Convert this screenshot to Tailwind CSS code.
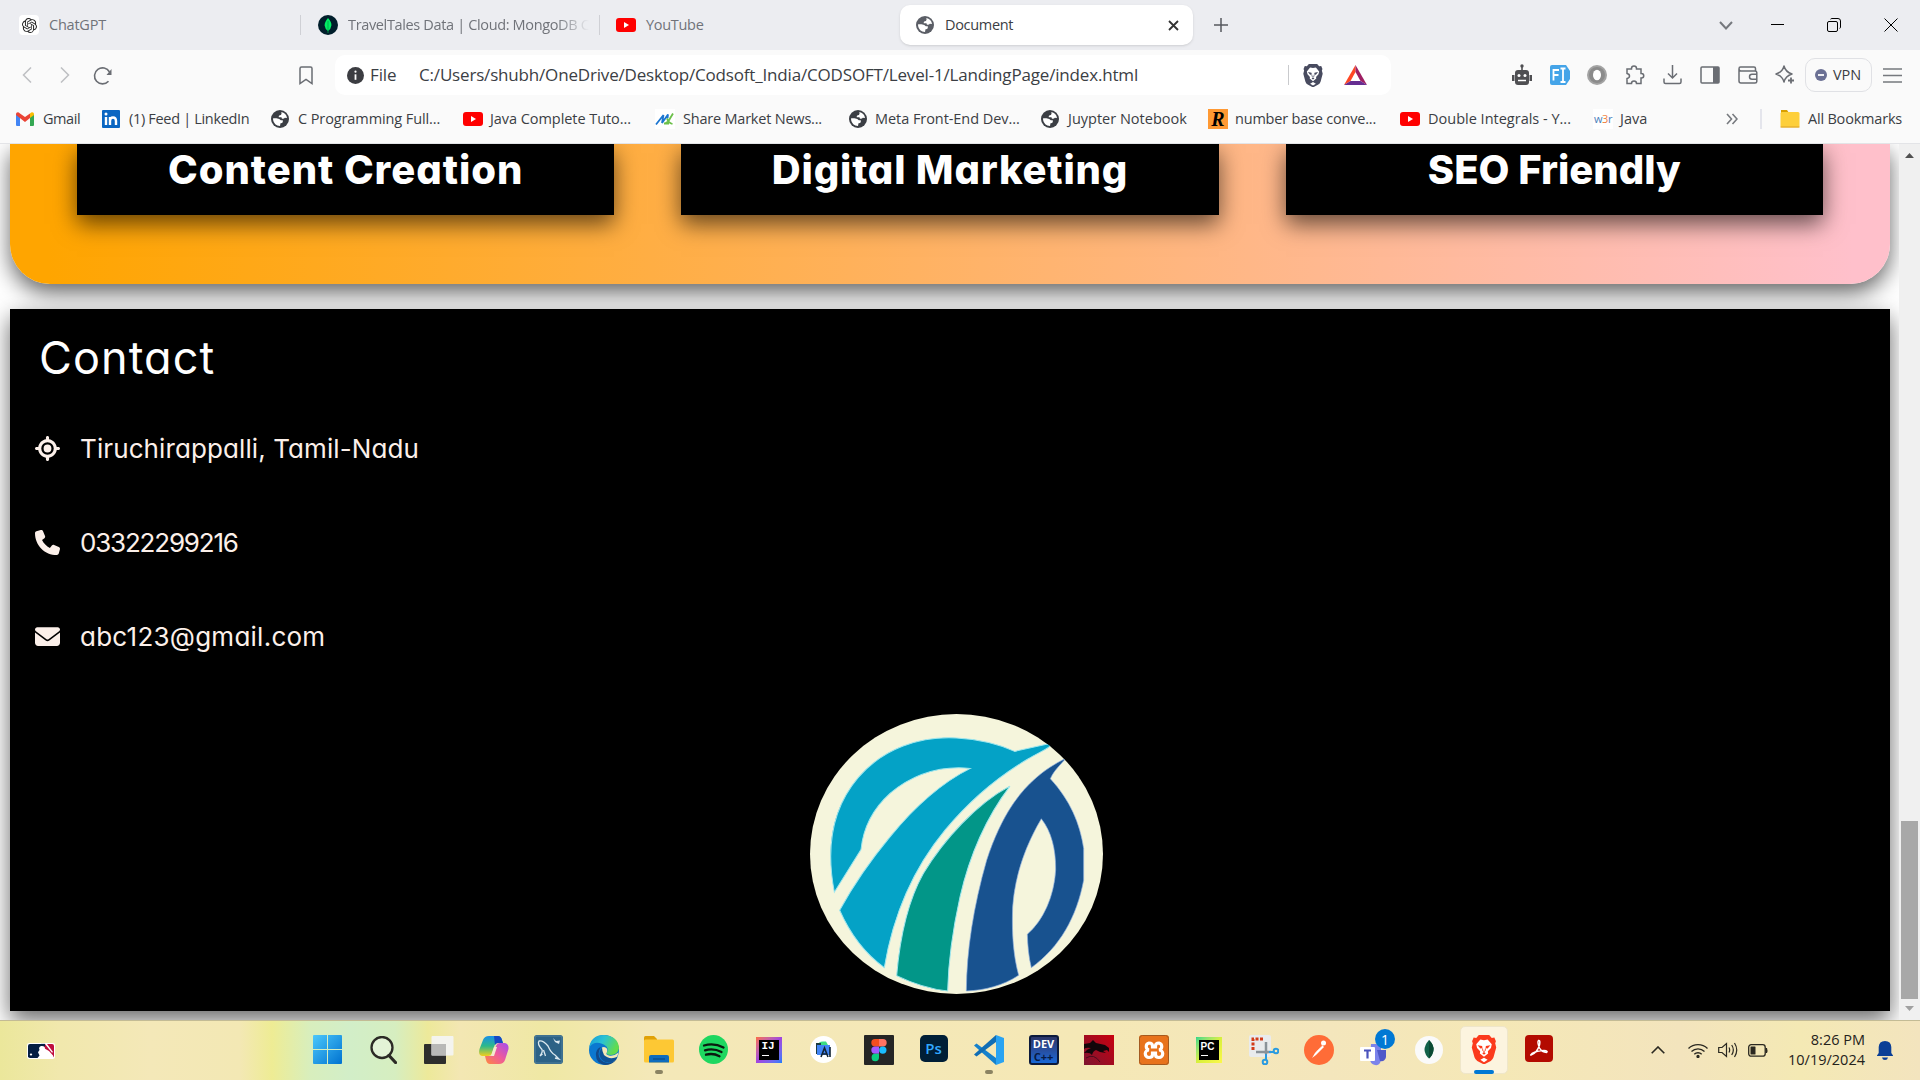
<!DOCTYPE html>
<html lang="en">
<head>
<meta charset="utf-8">
<title>Document</title>
<script src="https://cdn.jsdelivr.net/npm/@tailwindcss/browser@4"></script>
</head>
<body class="w-[1920px] h-[1080px] overflow-hidden bg-white font-['Open_Sans',sans-serif] text-[#3b3e44]">
<svg class="hidden">
  <symbol id="globe" viewBox="0 0 18 18"><circle cx="9" cy="9" r="9" fill="currentColor"/><path d="M10.300 2.100C13.400 2.600 15.700 4.900 16 8L13.800 7.800Q12.800 9.300 10.800 8.600L10.500 7.300H7.800Q7.300 5.800 8.700 5.200L10 5Q11 3.500 10.300 2.100Z" fill="#fff"/><path d="M2.100 8.200H5.500Q9 8.500 9.800 10.200H11.800V12Q11.500 13.200 9.500 13.200L9 15.900Q3 15.500 2.100 10Z" fill="#fff"/></symbol>
  <symbol id="yt" viewBox="0 0 20 14"><rect width="20" height="14" rx="3" fill="#f00"/><path d="M8 4v6l5-3z" fill="#fff"/></symbol>
  <symbol id="lion" viewBox="0 0 24 28"><path d="M7 0h10l2.500 2.800 2.500-.3L23.500 6l-.7 2 1 4-2.600 9.500q-.8 2.300-2.700 3.500L12 28.500 5.500 25q-1.900-1.200-2.700-3.500L.2 12l1-4-.7-2L2 2.500l2.500.3z" fill="currentColor"/><path d="M12 5l3.500-.7 4 4.700-.8 3.500-3 3.300.3 2-4 3.200-4-3.200.3-2-3-3.300L4.500 9l4-4.700z" fill="#fff"/><path d="M12 22l3.500 2L12 26.200 8.500 24z" fill="#fff"/><path d="M5.800 9.800l4.400.7.300 2.200-2 .3zM18.200 9.800l-4.400.7-.3 2.200 2 .3zM10.300 17.500L12 16.300l1.700 1.200L12 19z" fill="currentColor"/><path d="M10.600 13l.2 2.200 1.200.8 1.200-.8.200-2.200" stroke="currentColor" stroke-width=".8" fill="none"/></symbol>
</svg>

<!-- Tab strip -->
<header class="flex h-[50px] items-center bg-[#ecedf1] text-[14.5px] text-[#707379]">
  <div class="flex w-[300px] items-center pl-[19px]">
    <span class="flex size-5 items-center justify-center rounded bg-white"><svg class="size-[15px]" viewBox="0 0 24 24" fill="#222"><path d="M22.2819 9.8211a5.9847 5.9847 0 0 0-.5157-4.9108 6.0462 6.0462 0 0 0-6.5098-2.9A6.0651 6.0651 0 0 0 4.9807 4.1818a5.9847 5.9847 0 0 0-3.9977 2.9 6.0462 6.0462 0 0 0 .7427 7.0966 5.98 5.98 0 0 0 .511 4.9107 6.051 6.051 0 0 0 6.5146 2.9001A5.9847 5.9847 0 0 0 13.2599 24a6.0557 6.0557 0 0 0 5.7718-4.2058 5.9894 5.9894 0 0 0 3.9977-2.9001 6.0557 6.0557 0 0 0-.7475-7.0729zm-9.022 12.6081a4.4755 4.4755 0 0 1-2.8764-1.0408l.1419-.0804 4.7783-2.7582a.7948.7948 0 0 0 .3927-.6813v-6.7369l2.02 1.1686a.071.071 0 0 1 .038.052v5.5826a4.504 4.504 0 0 1-4.4945 4.4944zm-9.6607-4.1254a4.4708 4.4708 0 0 1-.5346-3.0137l.142.0852 4.783 2.7582a.7712.7712 0 0 0 .7806 0l5.8428-3.3685v2.3324a.0804.0804 0 0 1-.0332.0615L9.74 19.9502a4.4992 4.4992 0 0 1-6.1408-1.6464zM2.3408 7.8956a4.485 4.485 0 0 1 2.3655-1.9728V11.6a.7664.7664 0 0 0 .3879.6765l5.8144 3.3543-2.0201 1.1685a.0757.0757 0 0 1-.071 0l-4.8303-2.7865A4.504 4.504 0 0 1 2.3408 7.872zm16.5963 3.8558L13.1038 8.364 15.1192 7.2a.0757.0757 0 0 1 .071 0l4.8303 2.7913a4.4944 4.4944 0 0 1-.6765 8.1042v-5.6772a.79.79 0 0 0-.407-.667zm2.0107-3.0231l-.142-.0852-4.7735-2.7818a.7759.7759 0 0 0-.7854 0L9.409 9.2297V6.8974a.0662.0662 0 0 1 .0284-.0615l4.8303-2.7866a4.4992 4.4992 0 0 1 6.6802 4.66zM8.3065 12.863l-2.02-1.1638a.0804.0804 0 0 1-.038-.0567V6.0742a4.4992 4.4992 0 0 1 7.3757-3.4537l-.142.0805L8.704 5.459a.7948.7948 0 0 0-.3927.6813zm1.0976-2.3654l2.602-1.4998 2.6069 1.4998v2.9994l-2.5974 1.4997-2.6067-1.4997Z"/></svg></span>
    <span class="ml-[10px] tracking-[-0.22px] whitespace-nowrap">ChatGPT</span>
  </div>
  <div class="flex h-5 w-[299px] items-center border-l border-[#cfd0d5] pl-[17px]">
    <svg class="size-5" viewBox="0 0 20 20"><circle cx="10" cy="10" r="10" fill="#001e2b"/><path d="M10 3Q13.800 7 13.400 10.500 13 14 10 16 7 14 6.600 10.500 6.500 7 10 3Z" fill="#00ed64"/><path d="M10 6v12" stroke="#00a04a" stroke-width=".8"/></svg>
    <span class="ml-[10px] w-[245px] overflow-hidden tracking-[-0.35px] whitespace-nowrap [mask-image:linear-gradient(to_right,black_208px,transparent_241px)]">TravelTales Data | Cloud: MongoDB C</span>
  </div>
  <div class="flex h-5 w-[301px] items-center border-l border-[#cfd0d5] pl-4">
    <svg class="h-[14px] w-5"><use href="#yt"/></svg>
    <span class="ml-[10px] tracking-[-0.3px] whitespace-nowrap">YouTube</span>
  </div>
  <div class="flex h-10 w-[293px] items-center rounded-[10px] bg-white pl-4 shadow-sm">
    <svg class="size-[18px] text-[#5b5e66]"><use href="#globe"/></svg>
    <span class="ml-[11px] tracking-[-0.32px] whitespace-nowrap text-[#3b3e44]">Document</span>
    <svg class="mr-[14px] ml-auto size-[11px]" viewBox="0 0 11 11"><path d="M1 1l9 9M10 1l-9 9" stroke="#333" stroke-width="1.800"/></svg>
  </div>
  <svg class="ml-[21px] size-[14px]" viewBox="0 0 14 14"><path d="M7 0v14M0 7h14" stroke="#55585e" stroke-width="1.500"/></svg>
  <div class="ml-auto flex items-center pr-[22px]">
    <svg class="h-[9px] w-[14px]" viewBox="0 0 14 9"><path d="M1 1l6 6.500L13 1" stroke="#76797e" stroke-width="2" fill="none"/></svg>
    <svg class="ml-[38px] h-[14px] w-[13px]" viewBox="0 0 13 14"><path d="M0 6.500h13" stroke="#000"/></svg>
    <svg class="ml-[43px] size-[14px]" viewBox="0 0 14 14" fill="none" stroke="#000"><rect x=".5" y="3.500" width="10" height="10" rx="1.500"/><path d="M3.500 1.200Q4 .5 5 .5H11a2.500 2.500 0 0 1 2.500 2.500v6q0 1-.8 1.500"/></svg>
    <svg class="ml-[43px] size-[14px]" viewBox="0 0 14 14"><path d="M.5 .5l13 13M13.500 .5l-13 13" stroke="#000"/></svg>
  </div>
</header>

<!-- Navigation toolbar -->
<nav class="flex h-[50px] items-center bg-[#fafafa] pl-[22px] text-[#76797e]">
  <svg class="h-4 w-[10px]" viewBox="0 0 10 16"><path d="M9 .5L1.500 8 9 15.500" stroke="#bdbfc2" stroke-width="1.500" fill="none"/></svg>
  <svg class="ml-7 h-4 w-[10px]" viewBox="0 0 10 16"><path d="M1 .5L8.500 8 1 15.500" stroke="#bdbfc2" stroke-width="1.500" fill="none"/></svg>
  <svg class="ml-[23px] size-[19px]" viewBox="0 0 19 19"><path d="M15.500 15.200A8 8 0 1 1 16.500 6" stroke="#6a6d73" stroke-width="1.600" fill="none"/><path d="M18.500 3v6h-5z" fill="#6a6d73"/></svg>
  <svg class="ml-[187px] h-[19px] w-[14px]" viewBox="0 0 14 19"><path d="M1 2.500Q1 1 2.500 1h9Q13 1 13 2.500V17.500L7 13.300 1 17.500z" stroke="#6a6d73" stroke-width="1.500" fill="none"/></svg>
  <div class="ml-[22px] flex h-10 w-[1056px] items-center rounded-[10px] bg-white pl-3 text-[17px] text-[#3b3e44]">
    <svg class="size-[17px]" viewBox="0 0 17 17"><circle cx="8.500" cy="8.500" r="8.500" fill="#3c3d42"/><path d="M8.500 7.300v5.500" stroke="#fff" stroke-width="1.800"/><circle cx="8.500" cy="4.700" r="1.100" fill="#fff"/></svg>
    <span class="ml-[6px] w-[49px] tracking-[-0.1px] whitespace-nowrap">File</span>
    <span class="tracking-[-0.175px] whitespace-nowrap">C:/Users/shubh/OneDrive/Desktop/Codsoft_India/CODSOFT/Level-1/LandingPage/index.html</span>
    <div class="ml-auto flex items-center pr-6">
      <span class="h-5 w-px bg-[#c9cacd]"></span>
      <svg class="ml-[14px] h-[23px] w-5 text-[#484b5f]"><use href="#lion"/></svg>
      <svg class="ml-[21px] h-5 w-[23px]" viewBox="0 0 23 20"><path d="M11.500 0L0 20l6.500-4L11.500 7z" fill="#ff4724"/><path d="M11.500 0L23 20l-6.500-4-5-9z" fill="#9e1f63"/><path d="M0 20h23l-6.500-4h-10z" fill="#662d91"/></svg>
    </div>
  </div>
  <div class="ml-auto flex items-center pr-[18px]">
    <svg class="h-[22px] w-5" viewBox="0 0 20 22" fill="#4f4f52"><path d="M9.200 2h1.600v5H9.200z"/><circle cx="10" cy="2" r="1.700"/><rect x="3" y="6" width="14" height="15" rx="3"/><path d="M0 11h2.500v6H0zM17.500 11H20v6h-2.500z"/><circle cx="7" cy="11.500" r="1.500" fill="#fff"/><circle cx="13" cy="11.500" r="1.500" fill="#fff"/><path d="M6 16.500h8" stroke="#fff" stroke-width="1.500"/></svg>
    <svg class="ml-[18px] h-5 w-5" viewBox="0 0 20 20"><path d="M2 0h14l4 6v8l-4 6H2q-2 0-2-2V2Q0 0 2 0z" fill="#45a4e8"/><path d="M3.500 15.500V5h5.500M3.500 10h5M10.500 3.500h5M10.500 17h5M13 3.500V17" stroke="#fff" stroke-width="1.800" fill="none"/></svg>
    <svg class="ml-[17px] size-5" viewBox="0 0 20 20"><circle cx="10" cy="10" r="10" fill="#a3a3a3"/><circle cx="10" cy="10" r="8" fill="#8b8b8b"/><ellipse cx="10" cy="10" rx="4" ry="5.300" fill="#fff"/></svg>
    <svg class="ml-[18px] h-5 w-5" viewBox="0 0 20 20" fill="none" stroke="#6a6d73" stroke-width="1.500"><path d="M2 4H6.500V3.500a2.500 2.500 0 0 1 5 0V4H16v4.500h.5a2.200 2.200 0 0 1 0 4.500H16v5.500h-4.500a2.500 2.500 0 0 0-5 0H2V13.500q2.500-.5 2.500-2.500T2 8.500z"/></svg>
    <svg class="ml-[18px] h-5 w-[19px]" viewBox="0 0 19 20" fill="none" stroke="#6a6d73" stroke-width="1.500"><path d="M9.500 0v13M5 8.500l4.500 4.500L14 8.500M1 13.500V17q0 1.500 1.500 1.500h14Q18 18.500 18 17v-3.500"/></svg>
    <svg class="ml-[18px] h-[18px] w-5" viewBox="0 0 20 18"><rect x="1" y="1" width="18" height="16" rx="1" fill="none" stroke="#6a6d73" stroke-width="1.500"/><path d="M13 1h6v16h-6z" fill="#6a6d73"/></svg>
    <svg class="ml-[18px] h-[18px] w-5" viewBox="0 0 20 18" fill="none" stroke="#6a6d73" stroke-width="1.500"><path d="M17.500 5V2.500Q17.500 1 16 1H2.500Q1 1 1 2.700T2.500 5H17q1.800 0 1.800 1.500v9Q18.800 17 17 17H3q-2 0-2-2V3M19 8.300h-5a2.500 2.500 0 0 0 0 5h5"/></svg>
    <svg class="ml-[17px] size-5" viewBox="0 0 20 20" fill="none" stroke="#6a6d73" stroke-width="1.500"><path d="M9 1q1.500 6 8 8-6.500 2-8 8-1.500-6-8-8 6.500-2 8-8z" stroke-linejoin="round"/><path d="M16 12.500v6M13 15.500h6" stroke-width="1.800"/></svg>
    <div class="ml-[10px] flex h-[34px] w-[67px] items-center rounded-[10px] border border-[#e0e1e5] pl-[9px] text-[14.5px] text-[#3b3e44]">
      <svg class="size-3" viewBox="0 0 12 12"><circle cx="6" cy="6" r="6" fill="#6b7094"/><path d="M3 6h6" stroke="#fff" stroke-width="1.800"/></svg>
      <span class="ml-[6px] tracking-[-0.1px] whitespace-nowrap">VPN</span>
    </div>
    <svg class="ml-[11px] h-[15px] w-[19px]" viewBox="0 0 19 15"><path d="M0 1h19M0 7.500h19M0 14h19" stroke="#76797e" stroke-width="1.500"/></svg>
  </div>
</nav>

<!-- Bookmarks bar -->
<div class="flex h-[44px] items-center border-b border-[#e3e4e7] bg-[#fafafa] pb-[5px] pl-4 text-[14.5px] whitespace-nowrap">
  <div class="flex w-[86px] items-center"><svg class="h-[14px] w-[18px]" viewBox="0 0 18 14"><path d="M0 2v11q0 1 1 1h3V5z" fill="#4285f4"/><path d="M18 2v11q0 1-1 1h-3V5z" fill="#34a853"/><path d="M14 1.500Q16-.8 17.500 .8 18 1.400 18 3L14 6z" fill="#fbbc04"/><path d="M4 1.500Q2-.8 .5 .8 0 1.400 0 3L9 10l5-4V1.500L9 5z" fill="#ea4335"/></svg><span class="ml-[9px] tracking-[-0.45px]">Gmail</span></div>
  <div class="flex w-[169px] items-center"><svg class="size-[18px]" viewBox="0 0 18 18"><rect width="18" height="18" rx="1" fill="#0a66c2"/><path d="M4 7v8M8 15V7M8 11q0-3.500 3-3.500T14 11v4" stroke="#fff" stroke-width="2.400" fill="none"/><circle cx="4" cy="4" r="1.500" fill="#fff"/></svg><span class="ml-[9px] tracking-[-0.32px]">(1) Feed | LinkedIn</span></div>
  <div class="flex w-[192px] items-center"><svg class="size-[18px]"><use href="#globe"/></svg><span class="ml-[9px] tracking-[-0.1px]">C Programming Full...</span></div>
  <div class="flex w-[192px] items-center"><svg class="h-[14px] w-5"><use href="#yt"/></svg><span class="ml-[7px] tracking-[-0.06px]">Java Complete Tuto...</span></div>
  <div class="flex w-[194px] items-center"><svg class="size-5" viewBox="0 0 20 20"><rect width="20" height="20" fill="#fff"/><path d="M1 15.500L8.500 6 7 14l6-8.500-.5 4" stroke="#1b75d0" stroke-width="1.800" fill="none"/><path d="M10 14.500q4-2 5-5l3-5M12 9.500q1.500 4.500 5.500 5.500M9 14.500h5" stroke="#6cc04a" stroke-width="1.800" fill="none"/></svg><span class="ml-2 tracking-[-0.21px]">Share Market News...</span></div>
  <div class="flex w-[192px] items-center"><svg class="size-[18px]"><use href="#globe"/></svg><span class="ml-[8px] tracking-[-0.06px]">Meta Front-End Dev...</span></div>
  <div class="flex w-[167px] items-center"><svg class="size-[18px]"><use href="#globe"/></svg><span class="ml-[9px]">Juypter Notebook</span></div>
  <div class="flex w-[192px] items-center"><span class="flex size-5 items-center justify-center bg-[#f93] font-['Liberation_Serif',serif] text-[20px] leading-none font-bold text-black italic">R</span><span class="ml-[7px] tracking-[-0.2px]">number base conve...</span></div>
  <div class="flex w-[193px] items-center"><svg class="h-[14px] w-5"><use href="#yt"/></svg><span class="ml-2">Double Integrals - Y...</span></div>
  <div class="flex w-[133px] items-center"><span class="flex size-5 items-center justify-center bg-white text-[11px] tracking-[-0.5px] text-[#4a7ebb]">w<span class="text-[#f08040]">3</span>r</span><span class="ml-[7px]">Java</span></div>
  <svg class="h-3 w-3" viewBox="0 0 12 12"><path d="M1 1l4.500 5L1 11M6.500 1L11 6l-4.500 5" stroke="#76797e" stroke-width="1.600" fill="none"/></svg>
  <span class="ml-[22px] h-5 w-[2px] bg-[#e4e5ec]"></span>
  <svg class="ml-[18px] h-[18px] w-5" viewBox="0 0 20 18"><path d="M1 0h6l2 3H1z" fill="#d9a000"/><rect x=".5" y="2" width="19" height="15.500" rx="1.500" fill="#fdcf3b"/><path d="M.5 17h19" stroke="#dba12a"/></svg>
  <span class="ml-2 tracking-[-0.2px]">All Bookmarks</span>
</div>

<!-- Page viewport -->
<main class="flex h-[876px] overflow-hidden bg-white font-['Inter',sans-serif] [font-feature-settings:'cv11']">
  <div class="flex w-[1899px] flex-col gap-[25px] overflow-hidden pr-[9px] pl-[10px]">
    <section class="flex h-[140px] shrink-0 items-start gap-[67px] rounded-b-[40px] bg-[linear-gradient(90deg,#ffa500_2%,#ffc0cb_98%)] px-[67px] text-[40px] leading-[46px] font-extrabold text-white shadow-[0_9px_22px_rgba(0,0,0,0.6)]">
      <div class="flex h-[71px] flex-1 justify-center bg-black pt-[3px] shadow-[0_9px_22px_rgba(0,0,0,0.6)]"><span class="tracking-[0.95px]">Content Creation</span></div>
      <div class="flex h-[71px] flex-1 justify-center bg-black pt-[3px] shadow-[0_9px_22px_rgba(0,0,0,0.6)]"><span class="tracking-[0.8px]">Digital Marketing</span></div>
      <div class="flex h-[71px] flex-1 justify-center bg-black pt-[3px] shadow-[0_9px_22px_rgba(0,0,0,0.6)]"><span>SEO Friendly</span></div>
    </section>
    <footer class="flex h-[702px] shrink-0 flex-col bg-black text-[26px] text-[#fcf0ea] shadow-[0_9px_22px_rgba(0,0,0,0.6)]">
      <h2 class="mt-6 h-[54px] pl-[29px] text-[45px] leading-[50px] tracking-[1.1px] text-white">Contact</h2>
      <div class="mt-[30px] flex h-[62px] items-center pl-[25px]"><svg class="size-[25px]" viewBox="0 0 512 512" fill="currentColor"><path d="M256 0c17.700 0 32 14.300 32 32l0 34.700C368.400 80.100 431.900 143.600 445.300 224l34.700 0c17.700 0 32 14.300 32 32s-14.300 32-32 32l-34.700 0C431.900 368.400 368.400 431.900 288 445.300l0 34.700c0 17.700-14.300 32-32 32s-32-14.300-32-32l0-34.700C143.600 431.900 80.100 368.400 66.700 288L32 288c-17.700 0-32-14.300-32-32s14.300-32 32-32l34.700 0C80.100 143.600 143.600 80.100 224 66.700L224 32c0-17.700 14.300-32 32-32zM128 256a128 128 0 1 0 256 0 128 128 0 1 0 -256 0zm128-80a80 80 0 1 1 0 160 80 80 0 1 1 0-160z"/></svg><span class="ml-5 tracking-[0.1px]">Tiruchirappalli, Tamil-Nadu</span></div>
      <div class="mt-8 flex h-[62px] items-center pl-[25px]"><svg class="size-[25px]" viewBox="0 0 512 512" fill="currentColor"><path d="M164.900 24.600c-7.700-18.600-28-28.500-47.400-23.200l-88 24C12.100 30.200 0 46 0 64C0 311.400 200.600 512 448 512c18 0 33.800-12.100 38.600-29.500l24-88c5.300-19.400-4.600-39.700-23.200-47.400l-96-40c-16.300-6.800-35.200-2.100-46.300 11.600L304.700 368C234.300 334.700 177.300 277.700 144 207.300L193.300 167c13.700-11.200 18.400-30 11.600-46.300l-40-96z"/></svg><span class="ml-5 tracking-[-1.2px]">03322299216</span></div>
      <div class="mt-8 flex h-[62px] items-center pl-[25px]"><svg class="size-[25px]" viewBox="0 0 512 512" fill="currentColor"><path d="M48 64C21.500 64 0 85.500 0 112c0 15.100 7.100 29.300 19.200 38.400L236.800 313.600c11.400 8.500 27 8.500 38.400 0L492.800 150.400c12.100-9.100 19.200-23.300 19.200-38.400c0-26.500-21.500-48-48-48L48 64zM0 176L0 384c0 35.300 28.700 64 64 64l384 0c35.300 0 64-28.700 64-64l0-208L294.400 339.200c-22.800 17.100-54 17.100-76.800 0L0 176z"/></svg><span class="ml-5 tracking-[0.25px]">abc123@gmail.com</span></div>
      <svg class="mt-[47px] ml-[800px] h-[280px] w-[293px]" viewBox="60 42 879 839" preserveAspectRatio="none">
        <defs><clipPath id="disc"><ellipse cx="499.500" cy="461.500" rx="439.500" ry="419.500"/></clipPath></defs>
        <g clip-path="url(#disc)"><rect x="60" y="42" width="879" height="839" fill="#f5f5dc"/>
        <g stroke="#9fe6ee" stroke-width="3">
        <path d="M133 576C105 430 130 320 205 232C280 145 390 108 500 114C570 118 625 132 674 154L790 128C780 145 750 155 715 176C620 232 540 300 465 390C370 505 310 640 283 802C225 760 180 700 149 630C190 555 250 470 300 410C370 325 450 250 541 205C440 195 360 230 300 280C250 325 220 380 213 448Z" fill="#04a2c6"/>
        <path d="M660 258C560 310 460 420 400 520C355 600 330 710 320 826C365 848 420 866 473 872C475 780 490 680 510 590C540 460 590 350 660 258Z" fill="#029688"/></g>
        <g stroke="#8fb0e0" stroke-width="2"><path d="M829 174C805 200 790 215 781 236C840 300 870 370 881 445V540C860 650 810 740 724 802C716 770 713 735 712 702C760 660 792 590 797 510C798 450 785 395 754 356C710 430 675 520 668 620C665 700 670 765 686 825C640 855 585 870 529 872C530 750 550 620 590 480C630 360 690 240 829 174Z" fill="#18528f"/></g></g>
      </svg>
    </footer>
  </div>
  <div class="flex w-[21px] flex-col items-center bg-[#f0f0f0] pt-[9px] pb-[9px]">
    <svg class="h-[5px] w-[9px]" viewBox="0 0 9 5"><path d="M4.500 0L9 5H0z" fill="#505050"/></svg>
    <span class="mt-[663px] h-[179px] w-[17px] bg-[#a8a8a8]"></span>
    <svg class="mt-[7px] h-[5px] w-[9px]" viewBox="0 0 9 5"><path d="M4.500 5L9 0H0z" fill="#a0a0a0"/></svg>
  </div>
</main>

<!-- Taskbar -->
<footer class="flex h-[60px] items-center border-t border-[#c3bb95] bg-[linear-gradient(90deg,#ebe79b_0,#f1e8ad_60px,#f4e8b8_150px,#f3e8b4_240px,#eeec94_272px,#d8eebd_310px,#d2eec8_350px,#d6eec0_395px,#ede99a_428px,#f3e7b3_460px,#efe8a4_545px,#f4e8b8_650px,#f5e8b6_1100px,#f4e6bc_1330px,#f5e8b6_1500px,#f3e4bd_1680px,#f4e9b4_1800px,#f3e4be_1920px)]">
  <div class="w-[301px] pl-[27px]"><svg class="h-[16px] w-7" viewBox="0 0 28 18" preserveAspectRatio="none"><rect width="28" height="18" rx="2.500" fill="#fff"/><path d="M3 1h11v16H3q-2 0-2-2V3q0-2 2-2z" fill="#041e42"/><path d="M14 1h11q2 0 2 2v12q0 2-2 2H14z" fill="#bf0d3e"/><path d="M14 1h4v3h-4z" fill="#041e42"/><path d="M15 3.500a3 3 0 0 1 3 3L22 9l4 5 1 3H10.500l2-3-1.500-3.500L12.500 8 12 5.500Q13 3 15 3.500zM18 1l7 10 1-1L20 1z" fill="#fff"/><circle cx="4" cy="13" r="1.200" fill="#fff"/></svg></div>
  <div class="flex h-full items-center *:flex *:h-full *:w-[55px] *:items-center *:justify-center *:pb-[2px]">
    <div class="pr-[3px]"><svg class="size-[29px]" viewBox="0 0 29 29"><defs><linearGradient id="win" x2="1" y2="1"><stop stop-color="#4cc8fb"/><stop offset="1" stop-color="#0072d0"/></linearGradient></defs><path d="M0 1q0-1 1-1h13v14H0zM15 0h13q1 0 1 1v13H15zM0 15h14v14H1q-1 0-1-1zM15 15h14v13q0 1-1 1H15z" fill="url(#win)"/></svg></div>
    <div><svg class="h-7 w-[27px]" viewBox="0 0 27 28" fill="none" stroke="#2b2a25"><circle cx="12" cy="11.500" r="10.500" stroke-width="2.300" fill="#fff5"/><path d="M19 19.500l6.500 7" stroke-width="3.200" stroke-linecap="round"/></svg></div>
    <div><svg class="h-7 w-[30px]" viewBox="0 0 30 28"><rect y="8" width="22" height="20" rx="1" fill="#2e2e2c"/><rect x="7.500" width="22" height="19.500" rx="1" fill="#f4f4f4" opacity=".93"/><path d="M7.500 8H22v11.500H7.500z" fill="#b9b9b7"/></svg></div>
    <div><svg class="h-7 w-[30px]" viewBox="0 0 30 28"><defs><linearGradient id="cp1" x2="0" y2="1"><stop stop-color="#1a8fe8"/><stop offset=".5" stop-color="#2cb98a"/><stop offset="1" stop-color="#f2cf1d"/></linearGradient><linearGradient id="cp2" x1="1" x2="0" y2="1"><stop stop-color="#a24df0"/><stop offset=".5" stop-color="#ee5a9c"/><stop offset="1" stop-color="#ff8a3c"/></linearGradient></defs><path d="M10 0h9q3 0 4 4l1 3h-5q-3 0-4 4l-2 6q-1 3-4 3H3q-4-1-2.500-7L4 4q1.500-4 6-4z" fill="url(#cp1)"/><path d="M15 0h4q3 0 4 4l1 3h-5q-2 0-3 2z" fill="#1748c4"/><path d="M20 28h-9q-3 0-4-4l-1-4h5q3 0 4-4l2-6q1-3 4-3h5q4 1 3.500 6L26 24q-1.500 4-6 4z" fill="url(#cp2)"/><path d="M15 11l3 0-3 9-3 0z" fill="#f4ead0"/></svg></div>
    <div><svg class="size-[29px]" viewBox="0 0 29 29"><rect width="29" height="29" rx="3" fill="#2c6286"/><rect x="1" y="1" width="27" height="27" rx="2" fill="none" stroke="#50809c"/><path d="M6 21Q9 17 8 14.500 3 9 5 6 9 5 14 11 17 18 21 20L25 24 21 23M9.500 15l2 6M6 21l2.500-2" stroke="#dce9ef" stroke-width="1.300" fill="none"/><path d="M19 3l3 3 4-.5-1 3.500-4-2z" fill="#dce9ef"/></svg></div>
    <div><svg class="size-[30px]" viewBox="0 0 30 30"><defs><linearGradient id="ed" x2="1" y2=".4"><stop stop-color="#1698dc"/><stop offset=".5" stop-color="#2bc3d2"/><stop offset="1" stop-color="#62dc4c"/></linearGradient></defs><circle cx="15" cy="15" r="15" fill="#0b78d0"/><path d="M0 13Q2 0 15 0 29 1 30 13 29 20 22 20 17 20 17.500 17.500 20 15 17.500 11.500 12 7 6 8 2 9 0 13z" fill="url(#ed)"/><path d="M12 12Q7 19 12 25q6 6 15 0-4 5-11 5Q6 28 7 18q1-5 5-6z" fill="#114a8b"/><path d="M13.500 12q6 0 4.500 5-2 2.500 2 3.500 5 1 9.500-3-1 6-6 7-8-1-10-5-2-4 0-7.500z" fill="#f4e8b8"/><path d="M13 12.500Q8 19 13 25q6 5 14 0l1.500-3Q20 25 15 20q-2-4-2-7.500z" fill="#0e5296"/></svg></div>
    <div class="relative"><svg class="h-[27px] w-[30px]" viewBox="0 0 30 27"><path d="M0 1.500Q0 0 1.500 0H10l3 3v4H0z" fill="#e0a106"/><rect y="3.500" width="30" height="23" rx="1.500" fill="#fdc834"/><path d="M5 26.500V21q0-2 2-2h16q2 0 2 2v5.500z" fill="#0f6cbd"/><path d="M9 23h12" stroke="#0a4c8c" stroke-width="1.300"/></svg><span class="absolute bottom-[6px] left-[24px] h-1 w-2 rounded-full bg-[#8b8363]"></span></div>
    <div><svg class="size-[29px]" viewBox="0 0 29 29"><circle cx="14.500" cy="14.500" r="14.500" fill="#1ed760"/><path d="M5 10.500q10-3 19.500 2M6 15.300q8.500-2.500 16.500 1.700M7 19.700q7-2 13.500 1.500" stroke="#0a1a0f" stroke-width="2.300" fill="none" stroke-linecap="round"/></svg></div>
    <div><span class="flex size-[26px] items-center justify-center bg-linear-to-br from-[#fd6b3c] via-[#a044e0] to-[#0b7cfb]"><span class="flex size-5 flex-col bg-black pt-px pl-[3px] font-['Liberation_Mono',monospace] text-[11px] leading-[11px] font-bold text-white">IJ<span class="mt-[3px] h-px w-[7px] bg-white"></span></span></span></div>
    <div><svg class="size-[27px]" viewBox="0 0 27 27"><circle cx="13.500" cy="13.500" r="13.500" fill="#fff"/><path d="M8 9q0-3.500 5-3.500h3l2 3.500z" fill="#3ddc84"/><path d="M6 7h5v3H7.500v8H6z" fill="#1c3a3f"/><rect x="7" y="9" width="13" height="10" fill="#4285f4"/><path d="M11 21l3.500-9 3.500 9M12.500 18h4M20 11v10" stroke="#123" stroke-width="1.600" fill="none"/></svg></div>
    <div><svg class="size-[30px]" viewBox="0 0 30 30"><rect width="30" height="30" rx="1" fill="#252525"/><path d="M15 4h-4a3.700 3.700 0 0 0 0 7.400h4z" fill="#f24e1e"/><path d="M15 4h4a3.700 3.700 0 0 1 0 7.400h-4z" fill="#ff7262"/><path d="M15 11.400h-4a3.700 3.700 0 0 0 0 7.400h4z" fill="#a259ff"/><circle cx="18.800" cy="15.100" r="3.700" fill="#1abcfe"/><path d="M15 18.800h-4a3.700 3.700 0 1 0 4 3.700z" fill="#0acf83"/></svg></div>
    <div><span class="mb-[2px] flex h-[27px] w-7 items-center justify-center rounded-[5px] bg-[#001e36] text-[15px] font-semibold text-[#31a8ff]">Ps</span></div>
    <div class="relative"><svg class="size-[30px]" viewBox="0 0 30 30"><path d="M0 10.500L2.500 8.500 22 23v7z" fill="#1581cc"/><path d="M0 19.500L2.500 21.500 22 7V0z" fill="#0f6db5"/><path d="M22 0l8 3v24l-8 3z" fill="#29a3f2"/></svg><span class="absolute bottom-[6px] left-[24px] h-1 w-2 rounded-full bg-[#8b8363]"></span></div>
    <div><span class="flex size-[30px] flex-col items-center justify-between overflow-hidden rounded-[3px] border-2 border-[#0c1a3c] bg-linear-to-b from-[#2a3568] to-[#1668d8] text-[11px] leading-[13px] font-bold text-white">DEV<span class="text-[11px] leading-[13px] text-[#071a44]">C++</span></span></div>
    <div><svg class="size-[30px]" viewBox="0 0 30 30"><defs><linearGradient id="rd" x1="1" x2="0" y2="1"><stop stop-color="#c9000f"/><stop offset="1" stop-color="#7d1530"/></linearGradient></defs><rect width="30" height="30" fill="url(#rd)"/><path d="M0 9l6-1 3-3 3 3 9 2 4 3v4l-2-2-4 1 3 2-6-1-4-2q-3 1-4 5-2-3-8-2 3-4 7-5-5-1-7 1z" fill="#12060a"/><path d="M2 23q8-5 14 4" stroke="#4a0c1c" fill="none"/></svg></div>
    <div><svg class="size-[30px]" viewBox="0 0 30 30"><rect width="30" height="30" rx="3" fill="#e8731c"/><rect x=".5" y=".5" width="29" height="29" rx="3" fill="none" stroke="#a35a20"/><path d="M10 8a3.600 3.600 0 0 0 0 7 3.600 3.600 0 0 0 0 7.500q3.500 0 3.500-3v-1.500h3v1.500q0 3 3.500 3a3.600 3.600 0 0 0 0-7.500 3.600 3.600 0 0 0 0-7q-3.500 0-3.500 3V12h-3v-1q0-3-3.500-3z" fill="none" stroke="#fff" stroke-width="3.200"/></svg></div>
    <div><span class="flex size-[26px] items-center justify-center bg-linear-to-br from-[#21d789] via-[#d8f03c] to-[#fcf84a]"><span class="flex size-5 flex-col bg-black pt-px pl-[2px] font-['Liberation_Sans',sans-serif] text-[10px] leading-[11px] font-bold text-white">PC<span class="mt-[3px] h-px w-[7px] bg-white"></span></span></span></div>
    <div><svg class="size-[30px]" viewBox="0 0 30 30"><rect width="22" height="22" rx="2" fill="#e9ebed"/><path d="M4 15V4h11" stroke="#d33b18" stroke-width="3" stroke-dasharray="3 1.500" fill="none"/><path d="M17 7v12M7 17h15" stroke="#8a9299" stroke-width="2.500"/><g fill="none" stroke="#2a9be0" stroke-width="2"><circle cx="27" cy="16" r="2.300"/><circle cx="16" cy="27" r="2.300"/><path d="M17 19v6M20 17h5"/></g></svg></div>
    <div><svg class="size-[30px]" viewBox="0 0 30 30"><circle cx="15" cy="15" r="15" fill="#ff6c37"/><circle cx="19.500" cy="8" r="2.500" fill="#fff"/><path d="M18 10l2 2-8 8-4 3 3-5z" fill="#fff"/><path d="M13 15l5-4.500" stroke="#ff6c37"/></svg></div>
    <div class="relative"><svg class="mt-1 h-7 w-[28px]" viewBox="0 0 28 28"><path d="M11 6h10v16q-1 6-6 5-5-1-5-6z" fill="#7b83eb"/><path d="M17 12h9v7q-1 5-6 4z" fill="#5059c9"/><rect y="9" width="15" height="14" rx="1" fill="#fff"/><path d="M4 12.500h7M7.500 12.500v8" stroke="#4b53bc" stroke-width="2.200"/></svg><span class="absolute top-[8px] left-[29px] flex size-5 items-center justify-center rounded-full bg-[#0078d4] text-[14px] text-white">1</span></div>
    <div><svg class="size-7" viewBox="0 0 28 28"><circle cx="14" cy="14" r="14" fill="#fafafa"/><path d="M14 4q5 5 4.500 10Q18 19 14 22.500 10 19 9.500 14 9.500 9 14 4z" fill="#116149"/><path d="M14 4q5 5 4.500 10Q18 19 14 22.500z" fill="#0b4a35"/></svg></div>
    <div class="relative"><span class="flex size-12 items-center justify-center rounded-[5px] border border-[#efe6c9] bg-[#fcf4df]"><svg class="h-[29px] w-[26px] text-[#fb3a1c]"><use href="#lion"/></svg></span><span class="absolute bottom-[6px] left-[18px] h-1 w-5 rounded-full bg-[#0078d4]"></span></div>
    <div><svg class="mb-[2px] h-[27px] w-7" viewBox="0 0 28 27"><rect width="28" height="27" rx="4" fill="#b30b00"/><path d="M6 20q6-2 8.500-10Q15.500 5 13.500 5.500 12 7 14.500 13 17 17.500 21.500 17.500 23.500 16 19 15.500 12 15.500 7 18.500 5 20.500 6 20z" fill="none" stroke="#fff" stroke-width="1.500"/></svg></div>
  </div>
  <div class="ml-auto flex items-center pr-[27px] pb-px">
    <svg class="h-2 w-[14px]" viewBox="0 0 14 8"><path d="M.7 7.300L7 1l6.300 6.300" stroke="#2a2820" stroke-width="1.600" fill="none"/></svg>
    <svg class="ml-[23px] h-[15px] w-5" viewBox="0 0 20 15" fill="none" stroke="#2a2820" stroke-width="1.300"><path d="M.5 5.500a13.400 13.400 0 0 1 19 0M3.500 8.500a9.200 9.200 0 0 1 13 0M6.300 11.300a5.200 5.200 0 0 1 7.400 0"/><circle cx="10" cy="13.500" r="1" fill="#2a2820"/></svg>
    <svg class="ml-[10px] h-4 w-5" viewBox="0 0 20 16" fill="none" stroke="#2a2820" stroke-width="1.200"><path d="M.7 5.500H4L8.500 1.500v13L4 10.500H.7zM11 5.500q1.300 2.500 0 5M13.700 3q3.300 5 0 10M16.500 1q4.500 7 0 14"/></svg>
    <svg class="ml-[10px] h-[13px] w-5" viewBox="0 0 20 13"><rect x=".7" y=".7" width="16.500" height="11.500" rx="2.500" fill="none" stroke="#2a2820" stroke-width="1.300"/><rect x="2.500" y="2.500" width="5" height="8" rx=".5" fill="#2a2820"/><path d="M17.500 4h1.500q1 2.500 0 5h-1.500z" fill="#2a2820"/></svg>
    <div class="ml-5 flex w-[77px] flex-col items-end text-[14.5px] leading-5 text-[#24221b]"><span>8:26 PM</span><span>10/19/2024</span></div>
    <svg class="ml-3 h-[19px] w-4" viewBox="0 0 16 19"><path d="M8 0q6 0 6.300 6v6l1.700 2.500V15H0v-.5L1.700 12V6Q2 0 8 0zM5 16.500h6Q10.500 19 8 19t-3-2.500z" fill="#0b3f96"/></svg>
  </div>
</footer>
</body>
</html>
